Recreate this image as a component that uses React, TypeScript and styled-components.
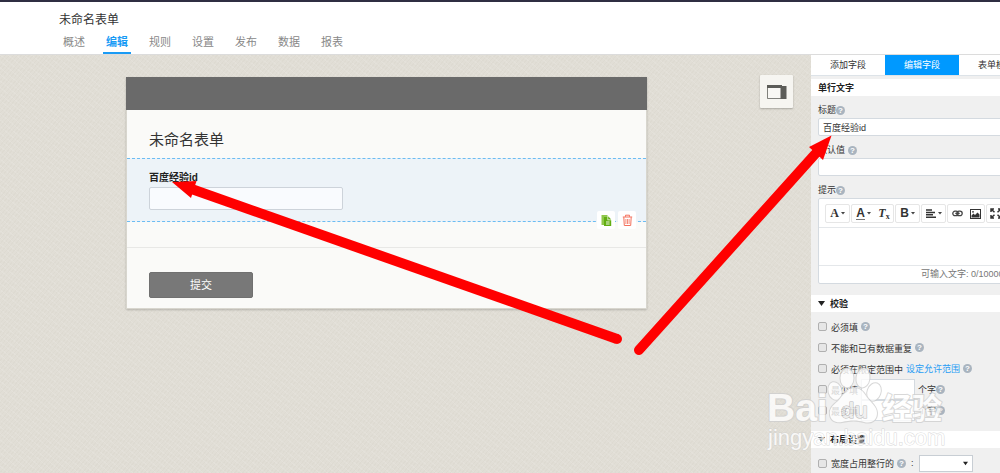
import React from 'react';
import styled, { createGlobalStyle } from 'styled-components';

const Global = createGlobalStyle`
  *, *::before, *::after { box-sizing: border-box; }
  html, body { margin: 0; }
  body {
    font-family: "Liberation Sans", "Noto Sans CJK SC", sans-serif;
    font-size: 9px;
    line-height: 16px;
    color: #333;
  }
  button, input, select { font: inherit; color: inherit; margin: 0; }
  svg { display: block; }
`;

const Page = styled.div`
  position: relative;
  display: flex;
  flex-direction: column;
  min-height: 100vh;
  overflow: hidden;
`;

const Header = styled.header`
  padding: 10px 59px 0;
  background: #fff;
  border-top: 2px solid #2f2e42;
  border-bottom: 1px solid #dcdcdc;
`;

const AppTitle = styled.h1`
  margin: 0;
  font-size: 12px;
  font-weight: 400;
  line-height: 16px;
`;

const Nav = styled.nav`
  display: flex;
  gap: 15px;
  margin-top: 5px;
`;

const NavLink = styled.a<{ $active?: boolean }>`
  width: 28px;
  border-bottom: 2px solid ${p => (p.$active ? '#1a9bf5' : 'transparent')};
  color: ${p => (p.$active ? '#1a9bf5' : '#888')};
  font-size: 11px;
  font-weight: ${p => (p.$active ? 700 : 400)};
  line-height: 19px;
  text-align: center;
  text-decoration: none;

  &:first-child { margin-left: 1px; }
`;

const Body = styled.main`
  flex: 1;
  display: flex;
  align-items: stretch;
`;

const Canvas = styled.section`
  flex: 1;
  min-width: 0;
  display: flex;
  align-items: flex-start;
  justify-content: space-between;
  padding: 20px 18px 20px 126px;
  background:
    repeating-linear-gradient(40deg, rgba(255, 255, 255, 0.1) 0 1px, transparent 1px 5px),
    repeating-linear-gradient(-50deg, rgba(120, 110, 80, 0.03) 0 1px, transparent 1px 3px),
    #e1ded6;
`;

const Card = styled.form`
  flex: 0 1 521px;
  margin-top: 2px;
  background: #fafaf8;
  border: 1px solid #d8d6ce;
  box-shadow: 0 1px 2px rgba(0, 0, 0, 0.2);
`;

const Banner = styled.div`
  height: 33px;
  margin: -1px -1px 0;
  background: #6a6a6a;
`;

const FormTitle = styled.h2`
  margin: 0;
  padding: 19px 22px 7px;
  font-size: 15px;
  font-weight: 400;
  line-height: 22px;
`;

const Field = styled.div`
  position: relative;
  padding: 11px 21px 11px 22px;
  background: #edf3f8;
  border: dashed #6cbcf2;
  border-width: 1px 0;
`;

const FieldLabel = styled.label`
  display: block;
  margin-bottom: 1px;
  color: #222;
  font-size: 10px;
  font-weight: 700;
`;

const FieldInput = styled.input`
  display: block;
  width: 194px;
  height: 23px;
  padding: 0 6px;
  background: #f9fbfe;
  border: 1px solid #cdd3da;
  border-radius: 2px;
`;

const Actions = styled.div`
  position: absolute;
  right: 10px;
  bottom: -8px;
  display: flex;
  gap: 3px;
`;

const ActionButton = styled.button`
  display: grid;
  place-items: center;
  width: 18px;
  height: 18px;
  padding: 0;
  background: #fff;
  border: 0;
  border-radius: 2px;
`;

const FormFooter = styled.div`
  margin-top: 25px;
  padding: 24px 22px 10px;
  border-top: 1px solid #e8e8e6;
`;

const Submit = styled.button`
  display: block;
  width: 104px;
  height: 26px;
  padding: 0;
  background: #787878;
  border: 1px solid #707070;
  border-radius: 2px;
  color: #fff;
  font-size: 11px;
`;

const DeviceButton = styled.button`
  display: grid;
  place-items: center;
  width: 33px;
  height: 33px;
  padding: 0;
  background: #f6f5f1;
  border: 0;
  border-radius: 1px;
  box-shadow: 0 1px 2px rgba(0, 0, 0, 0.25);
`;

const Sidebar = styled.aside`
  flex: 0 0 189px;
  overflow: hidden;
  background: #f0f0f0;
`;

const Panel = styled.div`
  width: 222px;
`;

const Tabs = styled.div`
  display: flex;
  margin-bottom: 3px;
  border-bottom: 1px solid #dde3e8;
`;

const Tab = styled.button<{ $active?: boolean }>`
  flex: 1;
  height: 20px;
  padding: 0;
  border: 0;
  background: ${p => (p.$active ? '#0099ff' : '#fff')};
  color: ${p => (p.$active ? '#fff' : '#333')};
`;

const SectionTitle = styled.h3`
  display: flex;
  align-items: center;
  gap: 5px;
  height: 17px;
  margin: 0;
  padding-left: 7px;
  background: #fff;
  color: #222;
  font-size: 9px;
  font-weight: 700;
`;

const Settings = styled.div`
  display: flex;
  flex-direction: column;
  gap: 6px;
  padding: 6px 7px 11px;
`;

const SettingLabel = styled.label<{ $spaced?: boolean }>`
  display: flex;
  align-items: center;
  gap: ${p => (p.$spaced ? 3 : 0)}px;
`;

const SettingInput = styled.input`
  display: block;
  width: 100%;
  height: 18px;
  padding: 0 4px;
  background: #fff;
  border: 1px solid #d4dae0;
  border-radius: 2px;
`;

const HelpDot = styled.span`
  display: inline-block;
  flex: none;
  width: 9px;
  height: 9px;
  border-radius: 50%;
  background: #a9b4bf;
  color: #fff;
  font-size: 8px;
  font-weight: 700;
  line-height: 9px;
  text-align: center;
`;

const Editor = styled.div`
  background: #fff;
  border: 1px solid #d4dae0;
  border-radius: 2px;
`;

const Toolbar = styled.div`
  display: flex;
  gap: 1px;
  padding: 5px 6px 4px;
  border-bottom: 1px solid #e4e7ea;
`;

const ToolGroup = styled.div`
  display: flex;
  border: 1px solid #e6e6e6;
  border-radius: 2px;
`;

const Tool = styled.button<{ $menu?: boolean }>`
  display: flex;
  align-items: center;
  justify-content: center;
  gap: 2px;
  width: ${p => (p.$menu ? 23 : 18)}px;
  height: 17px;
  padding: 0;
  background: none;
  border: 0;
  color: #333;
`;

const Glyph = styled.span<{ $serif?: boolean; $underline?: boolean; $italic?: boolean }>`
  border-bottom: 1px solid ${p => (p.$underline ? '#777' : 'transparent')};
  font-family: ${p => (p.$serif ? '"Liberation Serif", serif' : '"Liberation Sans", sans-serif')};
  font-size: 12px;
  font-style: ${p => (p.$italic ? 'italic' : 'normal')};
  font-weight: 700;
  line-height: 12px;

  sub { font-size: 8px; font-style: normal; line-height: 1px; vertical-align: -2px; }
`;

const EditArea = styled.div`
  height: 38px;
  border-bottom: 1px solid #e4e7ea;
  outline: none;
`;

const Counter = styled.div`
  padding-left: 102px;
  color: #777;
  line-height: 17px;
  white-space: nowrap;
`;

const Rules = styled.div`
  padding: 4px 7px 10px;
`;

const Rule = styled.div`
  display: flex;
  align-items: center;
  gap: 3px;
  height: 21px;
`;

const Layout = styled.div`
  padding: 5px 7px 0;
`;

const LayoutRule = styled(Rule)`
  height: 20px;
`;

const RuleLabel = styled.label`
  padding: 2px 0 0 1px;
`;

const Check = styled.input.attrs({ type: 'checkbox' })`
  appearance: none;
  flex: none;
  width: 9px;
  height: 9px;
  background: #e6e6e6;
  border: 1px solid #b0b0b0;
  border-radius: 2px;
`;

const RuleLink = styled.a`
  color: #2a9df4;
  text-decoration: none;
`;

const NumberBox = styled.input`
  width: 54px;
  height: 21px;
  background: #fff;
  border: 1px solid #d4dae0;
`;

const Unit = styled.span`
  display: flex;
  align-items: center;
`;

const Colon = styled.span`
  padding: 0 2px;
`;

const WidthSelect = styled.select`
  appearance: none;
  width: 54px;
  height: 17px;
  padding: 0;
  border: 1px solid #c8ced4;
  background: #fff;
`;

const SelectWrap = styled.span`
  position: relative;
  display: flex;

  svg { position: absolute; right: 5px; top: 6px; pointer-events: none; }
`;

const Overlay = styled.svg`
  position: absolute;
  top: 0;
  left: 0;
  pointer-events: none;
`;

const Help = () => <HelpDot aria-hidden="true">?</HelpDot>;

const Caret = () => (
  <svg width="4" height="3" viewBox="0 0 4 3"><path d="M0 0h4L2 2.6z" fill="#444" /></svg>
);

const Triangle = ({ size = 7 }: { size?: number }) => (
  <svg width={size} height="5" viewBox="0 0 7 5"><path d="M0 0h7L3.5 5z" fill="#222" /></svg>
);

const CopyIcon = () => (
  <svg width="11" height="13" viewBox="0 0 11 13">
    <path d="M.5 1h6v1.500H3V11H.5z" fill="#8fc74a" />
    <path d="M3 2.500h3.500v3.800h3.700V12H3z" fill="#62ae12" />
    <path d="M7.200 2.300l3 3.200h-3z" fill="#62ae12" />
    <path d="M5 8h3.600M5 10h3.600" stroke="#fff" strokeWidth=".9" />
  </svg>
);

const TrashIcon = () => (
  <svg width="11" height="13" viewBox="0 0 11 13" fill="none" stroke="#f4705c">
    <path d="M.8 3h9.400M3.500 2.800V1.200h4v1.600M1.800 3.200l.5 8.300h6.400l.5-8.300" />
    <path d="M3.900 5v5M5.500 5v5M7.100 5v5" strokeWidth=".8" />
  </svg>
);

const DeviceIcon = () => (
  <svg width="20" height="14" viewBox="0 0 20 14">
    <path d="M0 0h15v1h4.500v13H0z" fill="#5c5c58" />
    <path d="M1 3h12.500v10H1z" fill="#f8f7f4" />
    <path d="M0 3v11h13.500" fill="none" stroke="#a5a5a0" strokeWidth="1" />
  </svg>
);

const AlignIcon = () => (
  <svg width="10" height="9" viewBox="0 0 10 9">
    <path d="M0 1h6M0 3.400h9M0 5.800h7M0 8.200h10" stroke="#333" strokeWidth="1.500" />
  </svg>
);

const LinkIcon = () => (
  <svg width="11" height="7" viewBox="0 0 11 7" fill="none" stroke="#444" strokeWidth="1.300">
    <rect x=".8" y="1.200" width="5.400" height="4.400" rx="2.200" />
    <rect x="4.800" y="1.200" width="5.400" height="4.400" rx="2.200" />
    <path d="M3.300 3.400h4.400" />
  </svg>
);

const ImageIcon = () => (
  <svg width="11" height="10" viewBox="0 0 11 10">
    <rect x=".5" y=".5" width="10" height="9" fill="#fff" stroke="#333" />
    <path d="M1.500 8.500V6.500L3.500 4.500l1.500 1.500L7.500 3.500l2 2v3z" fill="#333" />
    <circle cx="3" cy="2.800" r=".9" fill="#333" />
  </svg>
);

const ExpandIcon = () => (
  <svg width="12" height="11" viewBox="0 0 12 11" fill="none" stroke="#333" strokeWidth="1.500">
    <path d="M1 4V1h3M8 1h3v3M11 7v3H8M4 10H1V7M1 1l3.500 3.200M11 1L7.500 4.200M11 10L7.500 6.800M1 10l3.500-3.200" />
  </svg>
);

const navItems = ['概述', '编辑', '规则', '设置', '发布', '数据', '报表'];

export default function App() {
  return (
    <Page>
      <Global />
      <Header>
        <AppTitle>未命名表单</AppTitle>
        <Nav>
          {navItems.map(item => (
            <NavLink key={item} href="#" $active={item === '编辑'}>{item}</NavLink>
          ))}
        </Nav>
      </Header>
      <Body>
        <Canvas>
          <Card>
            <Banner />
            <FormTitle>未命名表单</FormTitle>
            <Field>
              <FieldLabel htmlFor="experience-id">百度经验id</FieldLabel>
              <FieldInput id="experience-id" type="text" />
              <Actions>
                <ActionButton type="button" aria-label="复制"><CopyIcon /></ActionButton>
                <ActionButton type="button" aria-label="删除"><TrashIcon /></ActionButton>
              </Actions>
            </Field>
            <FormFooter>
              <Submit type="button">提交</Submit>
            </FormFooter>
          </Card>
          <DeviceButton type="button" aria-label="预览"><DeviceIcon /></DeviceButton>
        </Canvas>
        <Sidebar>
          <Panel>
            <Tabs>
              <Tab type="button">添加字段</Tab>
              <Tab type="button" $active>编辑字段</Tab>
              <Tab type="button">表单模板</Tab>
            </Tabs>
            <SectionTitle>单行文字</SectionTitle>
            <Settings>
              <div>
                <SettingLabel htmlFor="title">标题<Help /></SettingLabel>
                <SettingInput id="title" type="text" defaultValue="百度经验id" />
              </div>
              <div>
                <SettingLabel htmlFor="default" $spaced>默认值<Help /></SettingLabel>
                <SettingInput id="default" type="text" />
              </div>
              <div>
                <SettingLabel as="div" id="hint">提示<Help /></SettingLabel>
                <Editor>
                  <Toolbar>
                    <ToolGroup>
                      <Tool type="button" $menu><Glyph $serif>A</Glyph><Caret /></Tool>
                    </ToolGroup>
                    <ToolGroup>
                      <Tool type="button" $menu><Glyph $underline>A</Glyph><Caret /></Tool>
                      <Tool type="button"><Glyph $serif $italic>T<sub>x</sub></Glyph></Tool>
                    </ToolGroup>
                    <ToolGroup>
                      <Tool type="button" $menu><Glyph>B</Glyph><Caret /></Tool>
                    </ToolGroup>
                    <ToolGroup>
                      <Tool type="button" $menu aria-label="对齐"><AlignIcon /><Caret /></Tool>
                    </ToolGroup>
                    <ToolGroup>
                      <Tool type="button" aria-label="链接"><LinkIcon /></Tool>
                      <Tool type="button" aria-label="图片"><ImageIcon /></Tool>
                    </ToolGroup>
                    <ToolGroup>
                      <Tool type="button" aria-label="全屏"><ExpandIcon /></Tool>
                    </ToolGroup>
                  </Toolbar>
                  <EditArea role="textbox" aria-labelledby="hint" contentEditable suppressContentEditableWarning />
                  <Counter>可输入文字: 0/10000</Counter>
                </Editor>
              </div>
            </Settings>
            <SectionTitle><Triangle />校验</SectionTitle>
            <Rules>
              <Rule>
                <Check id="required" />
                <RuleLabel htmlFor="required">必须填</RuleLabel>
                <Help />
              </Rule>
              <Rule>
                <Check id="unique" />
                <RuleLabel htmlFor="unique">不能和已有数据重复</RuleLabel>
                <Help />
              </Rule>
              <Rule>
                <Check id="range" />
                <RuleLabel htmlFor="range">必须在限定范围中</RuleLabel>
                <RuleLink href="#">设定允许范围</RuleLink>
                <Help />
              </Rule>
              <Rule>
                <Check id="min" />
                <RuleLabel htmlFor="min">最少填</RuleLabel>
                <NumberBox type="text" aria-label="最少填" />
                <Unit>个字<Help /></Unit>
              </Rule>
              <Rule>
                <Check id="max" />
                <RuleLabel htmlFor="max">最多填</RuleLabel>
                <NumberBox type="text" aria-label="最多填" />
                <Unit>个字<Help /></Unit>
              </Rule>
            </Rules>
            <SectionTitle><Triangle />布局设置</SectionTitle>
            <Layout>
              <LayoutRule>
                <Check id="width" />
                <RuleLabel htmlFor="width">宽度占用整行的</RuleLabel>
                <Help />
                <Colon>:</Colon>
                <SelectWrap>
                  <WidthSelect aria-label="宽度占用整行的"><option value="" /></WidthSelect>
                  <Triangle size={5} />
                </SelectWrap>
              </LayoutRule>
            </Layout>
          </Panel>
        </Sidebar>
      </Body>

      <Overlay width="1000" height="473" viewBox="0 0 1000 473">
        <g stroke="#ff0000" strokeWidth="10" strokeLinecap="round" fill="#ff0000">
          <path d="M617 339L193 189.500" strokeLinecap="butt" />
          <circle cx="617" cy="339" r="5" stroke="none" />
          <path d="M172 182L196.500 181L191 198z" stroke="none" />
          <path d="M639 350L817 152" />
          <path d="M831.500 135.500L809 147L823 160z" stroke="none" />
        </g>
        <g
          fill="#fff"
          stroke="#cfcfcf"
          strokeWidth="2"
          strokeLinejoin="round"
          paintOrder="stroke"
          opacity=".8"
          fontFamily='"Liberation Sans", "Noto Sans CJK SC", sans-serif'
          fontWeight="700"
        >
          <text x="767" y="421" fontSize="39">Bai</text>
          <ellipse cx="835" cy="391" rx="6.500" ry="9" transform="rotate(-15 835 391)" />
          <ellipse cx="847" cy="378" rx="6.500" ry="9.500" />
          <ellipse cx="863" cy="378" rx="6.500" ry="9.500" transform="rotate(8 863 378)" />
          <ellipse cx="874" cy="392" rx="6.500" ry="9" transform="rotate(20 874 392)" />
          <path d="M854 388C846 388 843 396 838 401C832 406 829 409 830 415C831 421 836 423 842 422C850 420 858 420 864 422C872 424 877 420 877 413C877 406 870 402 866 396C863 391 860 388 854 388Z" />
          <text x="841" y="418" fontSize="22" fill="#eee" stroke="#aaa" strokeWidth="1">du</text>
          <text x="882" y="419" fontSize="30">经验</text>
          <text x="768" y="445" fontSize="22" fontWeight="400" strokeWidth="1">jingyan.baidu.com</text>
        </g>
      </Overlay>
    </Page>
  );
}
